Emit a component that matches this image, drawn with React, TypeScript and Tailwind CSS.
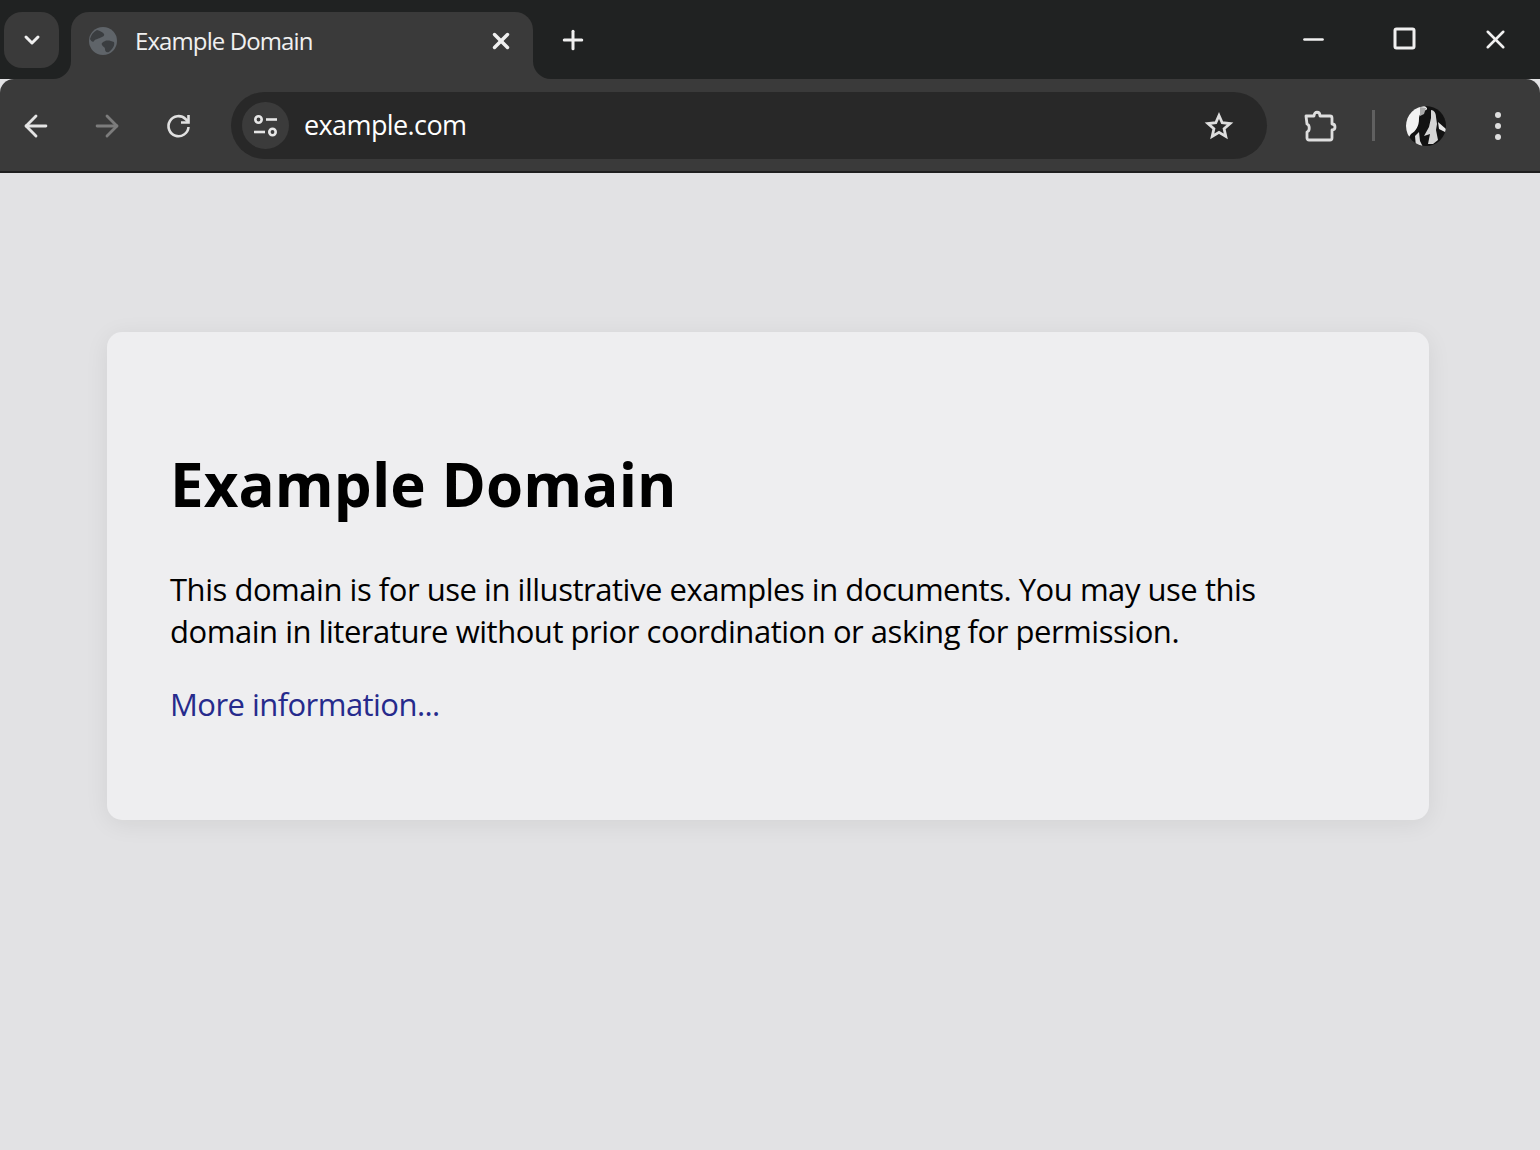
import { ArrowLeft, ArrowRight, ChevronDown, Minus, Plus, X } from 'lucide-react'

// concave corner at the foot of the tab
function TabFlare({ side }: { side: 'left' | 'right' }) {
  return (
    <svg
      viewBox="0 0 18 18"
      className={side === 'left' ? 'absolute bottom-0 left-[-18px] h-[18px] w-[18px]' : 'absolute bottom-0 right-[-18px] h-[18px] w-[18px]'}
    >
      <path d={side === 'left' ? 'M18 0V18H0A18 18 0 0 0 18 0Z' : 'M0 0V18H18A18 18 0 0 1 0 0Z'} fill="#3a3a3a" />
    </svg>
  )
}

function GlobeIcon() {
  return (
    <svg viewBox="0 0 30 30" className="h-[30px] w-[30px]">
      <circle cx="15" cy="15" r="14" fill="#5f6469" />
      <path d="M9 4c3 1 6 2 7 4s-2 3-4 4-5 1-6 3-3 0-4-2C3 9 5 6 9 4Z" fill="#3a3d40" />
      <path d="M17 15c3-1 6 0 9 1 1 3-1 7-5 10-3 1-4-1-4-3s-2-2-3-4 1-3 3-4Z" fill="#3a3d40" />
    </svg>
  )
}

function ReloadIcon() {
  return (
    <svg viewBox="0 0 27 27" fill="none" stroke="#e0e0e0" strokeWidth="2.6" className="ml-[41px] h-[27px] w-[27px]">
      <path d="M23.500 15a10 10 0 1 1-3-8l3 3" />
      <path d="M23.500 3v7.500H16" />
    </svg>
  )
}

function TuneIcon() {
  return (
    <svg viewBox="0 0 28 28" fill="none" stroke="#e6e6e6" strokeWidth="2.6" className="h-7 w-7">
      <circle cx="6.5" cy="7.5" r="3.2" />
      <path d="M14 7.5h11" />
      <path d="M2 20h11" />
      <circle cx="20.5" cy="20" r="3.2" />
    </svg>
  )
}

function StarIcon() {
  return (
    <svg viewBox="0 0 30 30" fill="none" stroke="#dedede" strokeWidth="2.8" strokeLinejoin="miter" className="h-[30px] w-[30px]">
      <path d="M15 4.500l3.200 7.200 7.800.8-5.900 5.200 1.700 7.700L15 21.400l-6.800 4 1.700-7.700L4 12.500l7.800-.8Z" />
    </svg>
  )
}

function PuzzleIcon() {
  return (
    <svg viewBox="0 0 34 34" fill="none" stroke="#dedede" strokeWidth="2.8" strokeLinejoin="round" className="h-[34px] w-[34px]">
      <path d="M3 7h8c0-5 6-5 6 0h10a2 2 0 0 1 2 2v6c4 0 4 6 0 6v8a2 2 0 0 1-2 2H6a2 2 0 0 1-2-2v-6c3-1 3-7 0-8Z" />
    </svg>
  )
}

function Avatar() {
  return (
    <svg viewBox="0 0 42 42" className="h-[42px] w-[42px]">
      <defs>
        <clipPath id="avatar-clip">
          <circle cx="21" cy="21" r="20" />
        </clipPath>
      </defs>
      <g clipPath="url(#avatar-clip)">
        <rect width="42" height="42" fill="#121212" />
        <path d="M0 12C4 6 10 1 19 1c3 1 4 3 2 4-4 1-7 4-7 9 0 7-3 12-8 15L4 32 0 28Z" fill="#f2f2f2" />
        <path d="M15 2l6 1-2 6-4 2Z" fill="#a8a8a8" />
        <path d="M10 31l4-4 1 9 3 6h-7Z" fill="#dcdcdc" />
        <path d="M26 5c3 0 5 3 5 7l1 7-1 6 2 10-5 4h-5l2-10-6 2 5-9 2-9Z" fill="#d6d6d6" />
        <path d="M33 17l9 8v3l-8-4Z" fill="#e8e8e8" />
      </g>
    </svg>
  )
}

function MenuDots() {
  return (
    <svg viewBox="0 0 8 32" fill="#dedede" className="ml-auto h-8 w-2">
      <circle cx="4" cy="5" r="3" />
      <circle cx="4" cy="16" r="3" />
      <circle cx="4" cy="27" r="3" />
    </svg>
  )
}

export default function App() {
  return (
    <div className="flex h-[1150px] flex-col bg-[#e2e2e4] font-['Open_Sans','Noto_Sans',sans-serif]">
      <div className="flex h-[79px] shrink-0 items-start bg-[#202222] pt-3 text-[#f0f0f0]">
        <div className="ml-1 flex h-14 w-[55px] items-center justify-center rounded-[18px] bg-[#3a3a3a]">
          <ChevronDown size={24} strokeWidth={3} />
        </div>
        <div className="relative ml-3 flex h-[67px] w-[462px] items-center rounded-t-[18px] bg-[#3a3a3a] pb-[10px] pl-[17px] pr-[19px]">
          <TabFlare side="left" />
          <TabFlare side="right" />
          <GlobeIcon />
          <span className="ml-[17px] flex-1 text-[24px] tracking-[-0.9px]">Example Domain</span>
          <X size={26} strokeWidth={3.2} />
        </div>
        <div className="ml-[25px] mt-[13px]">
          <Plus size={30} strokeWidth={2.4} />
        </div>
        <div className="ml-auto mr-[29px] mt-[12px] flex items-center gap-[60px]">
          <Minus size={31} strokeWidth={2} />
          <svg viewBox="0 0 31 31" fill="none" stroke="currentColor" strokeWidth="3" className="h-[31px] w-[31px]">
            <rect x="6" y="5" width="19" height="19" rx="1.500" />
          </svg>
          <X size={31} strokeWidth={2} />
        </div>
      </div>

      <div className="flex h-[94px] shrink-0 items-start rounded-t-[14px] border-b-2 border-[#1f1f1f] bg-[#3a3a3a] pl-[19px] pr-[38px] pt-[13px] text-[#e4e4e4]">
        <div className="flex h-[67px] items-center">
          <ArrowLeft size={34} strokeWidth={2} />
          <ArrowRight size={34} strokeWidth={2} className="ml-[37px] text-[#7c7c7c]" />
          <ReloadIcon />
        </div>
        <div className="ml-[39px] flex h-[67px] w-[1036px] items-center rounded-full bg-[#282828] pl-[11px] pr-[33px]">
          <div className="flex h-[47px] w-[47px] items-center justify-center rounded-full bg-[#3b3b3b]">
            <TuneIcon />
          </div>
          <span className="ml-[15px] flex-1 text-[27px] tracking-[-0.6px] text-white">example.com</span>
          <StarIcon />
        </div>
        <div className="flex h-[67px] flex-1 items-center">
          <div className="ml-[36px]">
            <PuzzleIcon />
          </div>
          <div className="ml-[35px] h-[31px] w-[3px] bg-[#606060]" />
          <div className="ml-[30px]">
            <Avatar />
          </div>
          <MenuDots />
        </div>
      </div>

      <div className="flex flex-1 items-start justify-center pr-[4px] pt-[159px]">
        <div className="h-[488px] w-[1322px] rounded-[15px] bg-[#eeeef0] pl-[63px] pr-[100px] pt-[108px] text-black shadow-[0_4px_24px_rgba(0,0,0,0.07)]">
          <h1 className="text-[60px] font-bold leading-[88px] tracking-[0.1px]">Example Domain</h1>
          <p className="mt-[40px] text-[31px] leading-[42px] tracking-[-0.47px]">
            This domain is for use in illustrative examples in documents. You may use this domain in literature without prior coordination or asking for permission.
          </p>
          <a className="mt-[31px] block text-[31px] leading-[42px] tracking-[-0.55px] text-[#262a8c]">More information...</a>
        </div>
      </div>
    </div>
  )
}
